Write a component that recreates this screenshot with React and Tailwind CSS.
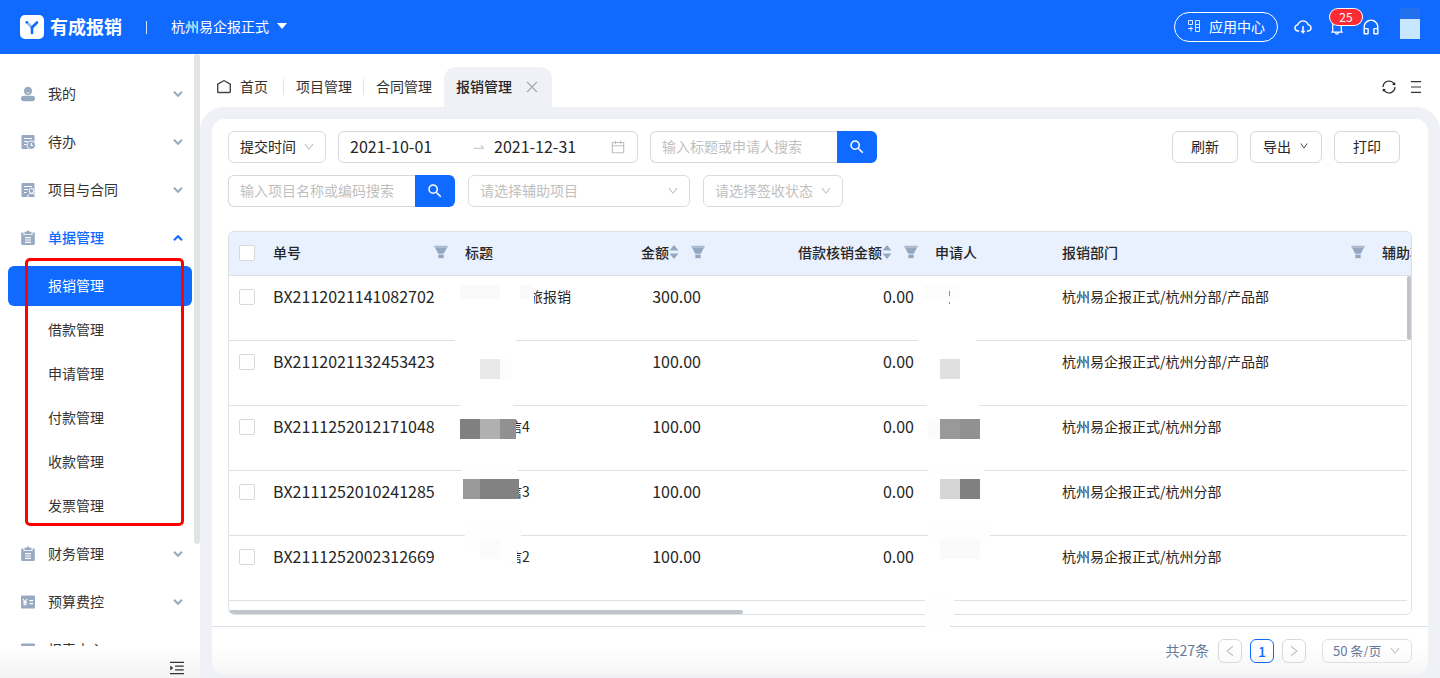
import React from 'react'
import clsx from 'clsx'
import {
  AiOutlineBell,
  AiOutlineCalendar,
  AiOutlineClose,
  AiOutlineCloudDownload,
  AiOutlineCustomerService,
  AiOutlineDown,
  AiOutlineLeft,
  AiOutlineMenuUnfold,
  AiOutlineRight,
  AiOutlineSwapRight,
  AiOutlineSync,
} from 'react-icons/ai'
import { MdSearch } from 'react-icons/md'

const menu = [
  { label: '我的', icon: 'user' },
  { label: '待办', icon: 'todo' },
  { label: '项目与合同', icon: 'contract' },
  {
    label: '单据管理',
    icon: 'clipboard',
    open: true,
    children: ['报销管理', '借款管理', '申请管理', '付款管理', '收款管理', '发票管理'],
  },
  { label: '财务管理', icon: 'clipboard' },
  { label: '预算费控', icon: 'budget' },
  { label: '报表中心', icon: 'report' },
]

const rows = [
  { no: 'BX2112021141082702', title: '旅报销', indent: 'pl-16', amount: '300.00', dept: '杭州易企报正式/杭州分部/产品部' },
  { no: 'BX2112021132453423', title: '', indent: 'pl-0', amount: '100.00', dept: '杭州易企报正式/杭州分部/产品部' },
  { no: 'BX2111252012171048', title: '信4', indent: 'pl-[43px]', amount: '100.00', dept: '杭州易企报正式/杭州分部' },
  { no: 'BX2111252010241285', title: '信3', indent: 'pl-[43px]', amount: '100.00', dept: '杭州易企报正式/杭州分部' },
  { no: 'BX2111252002312669', title: '信2', indent: 'pl-[43px]', amount: '100.00', dept: '杭州易企报正式/杭州分部' },
]

// mosaic blocks that hide private data: [x, y, width, height, colour]
const mosaic = [
  [227, 104, 61, 10, '#ffffff'],
  [287, 54, 19, 20, '#ffffff'],
  [232, 54, 40, 14, '#fafafa'],
  [292, 54, 14, 14, '#fafafa'],
  [690, 104, 58, 10, '#ffffff'],
  [696, 54, 36, 14, '#fcfcfc'],
  [721, 60, 1, 5, '#8a8a8a'],
  [721, 71, 1, 2, '#8a8a8a'],
  [232, 170, 53, 8, '#ffffff'],
  [252, 128, 20, 20, '#e9e9e9'],
  [272, 128, 12, 20, '#fcfcfc'],
  [699, 170, 52, 8, '#ffffff'],
  [712, 128, 20, 20, '#e0e0e0'],
  [234, 234, 56, 10, '#fefefe'],
  [232, 188, 20, 20, '#808080'],
  [252, 188, 20, 20, '#b0b0b0'],
  [272, 188, 16, 20, '#919191'],
  [700, 234, 56, 10, '#fefefe'],
  [700, 188, 12, 20, '#fbfbfb'],
  [712, 188, 20, 20, '#999999'],
  [732, 188, 20, 20, '#919191'],
  [237, 294, 56, 24, '#fefefe'],
  [235, 248, 17, 20, '#999999'],
  [252, 248, 39, 20, '#828282'],
  [700, 294, 62, 16, '#fefefe'],
  [712, 248, 20, 20, '#d5d5d5'],
  [732, 248, 20, 20, '#808080'],
  [278, 308, 11, 28, '#fefefe'],
  [252, 308, 20, 20, '#fbfbfb'],
  [712, 308, 40, 20, '#fafafa'],
  [697, 366, 29, 28, '#fefefe'],
  [698, 394, 24, 6, '#fefefe'],
]

function MenuIcon({ name }) {
  if (name === 'user') {
    return (
      <svg className="size-4" viewBox="0 0 16 16" fill="#98aac2">
        <path d="M8 .8a4 4 0 0 1 4 4.200c0 2.300-1.600 4.200-4 4.200S4 7.300 4 5a4 4 0 0 1 4-4.200z" />
        <rect x="1" y="9.800" width="14" height="5.400" rx="2.700" />
        <path d="M7 6.700c.6.400 1.400.4 2 0" stroke="#fff" fill="none" strokeLinecap="round" />
      </svg>
    )
  }
  if (name === 'todo' || name === 'contract') {
    return (
      <svg className="size-4" viewBox="0 0 16 16">
        <rect x="1.500" y="1" width="13" height="14" rx="1.200" fill="#98aac2" />
        <path d="M4 4.500h8M4 7.500h4M4 10.500h2.500" stroke="#fff" strokeWidth="1.200" />
        {name === 'todo' ? (
          <>
            <circle cx="11.300" cy="11.200" r="4.200" fill="#98aac2" stroke="#fff" />
            <path d="M11.200 9v2.500h2" stroke="#fff" strokeWidth="1.200" fill="none" />
          </>
        ) : (
          <>
            <path d="M7.500 15.500c0-2.200 1.500-3.500 3-4h2c1.500.5 3 1.800 3 4z" fill="#98aac2" stroke="#fff" />
            <circle cx="11.500" cy="8.800" r="2.400" fill="#98aac2" stroke="#fff" />
          </>
        )}
      </svg>
    )
  }
  if (name === 'clipboard') {
    return (
      <svg className="size-4" viewBox="0 0 16 16">
        <path d="M2 2.500h1.500v2.800h9V2.500H14a.8.8 0 0 1 .8.8V14a1 1 0 0 1-1 1H2.200a1 1 0 0 1-1-1V3.300a.8.8 0 0 1 .8-.8z" fill="#98aac2" />
        <path d="M4.500 1.800h2.200a1.300 1.300 0 0 1 2.600 0h2.200v2.500h-7z" fill="#98aac2" />
        <path d="M3.500 5h9v1h-9z" fill="#98aac2" />
        <path d="M5 7.700h6M5 10h6M5 12.300h6" stroke="#fff" strokeWidth="1.200" />
      </svg>
    )
  }
  return (
    <svg className="size-4" viewBox="0 0 16 16">
      <rect x="1" y="1.500" width="14" height="13" rx="1" fill="#98aac2" />
      <path d="M3 5l2 3 2-3M5 8v3.500M3.200 8.300h3.600M3.200 10h3.600M9.500 6.700h3.500M9.500 9.700h3.500" stroke="#fff" strokeWidth="1.200" fill="none" />
    </svg>
  )
}

function Chevron({ up = false }) {
  return (
    <svg className={clsx('size-3', up ? 'rotate-180 text-[#116aff]' : 'text-[#98aac2]')} viewBox="0 0 12 12">
      <path d="M2 3.800l4 4 4-4" fill="none" stroke="currentColor" strokeWidth="2" />
    </svg>
  )
}

function FilterIcon() {
  return (
    <svg className="h-[14px] w-[14px] shrink-0" viewBox="0 0 14 14" fill="#94a7c0">
      <path d="M.3.8h13.400v1.800H.3z" opacity=".75" />
      <path d="M.9 2.600h12.200L9.700 8.800H4.300z" />
      <path d="M4.300 8.800h5.400V10H4.300z" opacity=".35" />
      <path d="M4.300 10h5.400v3.200H4.300z" />
    </svg>
  )
}

function SortIcon() {
  return (
    <svg className="h-[14px] w-[10px] shrink-0" viewBox="0 0 10 14" fill="#94a7c0">
      <path d="M5 0l4.500 5.500H.5zM5 14L.5 8.500h9z" />
    </svg>
  )
}

function SelectBox({ label, children, className, muted = false }) {
  return (
    <div className={clsx('relative', className)}>
      <select
        aria-label={label}
        className={clsx(
          'h-8 w-full appearance-none rounded-md border border-[#d9dcdf] bg-white pr-7 pb-0.5 pl-[11px] text-sm outline-none',
          muted ? 'text-[#bfbfbf]' : 'text-[#262626]'
        )}
      >
        {children}
      </select>
      <AiOutlineDown className="pointer-events-none absolute top-[10px] right-[11px] size-3 text-[#bfbfbf]" />
    </div>
  )
}

function SearchBox({ placeholder }) {
  return (
    <div className="flex h-8 w-[227px]">
      <input
        type="text"
        aria-label={placeholder}
        placeholder={placeholder}
        className="min-w-0 flex-1 rounded-l-md border border-r-0 border-[#d9d9d9] px-[11px] pb-0.5 text-sm outline-none placeholder:text-[#bfbfbf]"
      />
      <button aria-label="搜索" className="flex w-10 items-center justify-center rounded-r-md bg-[#116aff] text-white">
        <MdSearch className="size-[18px]" />
      </button>
    </div>
  )
}

function Checkbox({ label }) {
  return (
    <input
      type="checkbox"
      aria-label={label}
      className="block size-4 appearance-none rounded-xs border border-[#d9d9d9] bg-white"
    />
  )
}

function Header() {
  return (
    <header className="flex h-[54px] shrink-0 items-center bg-[#116aff] px-5 text-white">
      <svg className="size-6" viewBox="0 0 24 24">
        <rect width="24" height="24" rx="5" fill="#fff" />
        <path d="M7 7.500l5 5" stroke="#8dbcff" strokeWidth="2.600" strokeLinecap="round" />
        <path d="M17 7.500l-5 5v5.500" stroke="#116aff" strokeWidth="2.600" strokeLinecap="round" strokeLinejoin="round" fill="none" />
        <circle cx="6.800" cy="7.300" r="1.300" fill="#116aff" />
      </svg>
      <h1 className="ml-[6px] pb-0.5 text-lg font-bold">有成报销</h1>
      <span className="ml-6 h-[13px] w-px bg-white/80" />
      <button className="ml-6 flex items-center gap-2 pb-0.5 text-sm">
        杭州易企报正式
        <svg className="h-[6px] w-[10px]" viewBox="0 0 10 6" fill="#fff">
          <path d="M0 0h10L5 6z" />
        </svg>
      </button>
      <div className="ml-auto flex items-center">
        <button className="flex h-[30px] items-center gap-2 rounded-full border border-white px-3 pb-0.5 text-sm">
          <svg className="size-[14px]" viewBox="0 0 14 14" fill="none" stroke="#fff" strokeOpacity=".85">
            <path d="M1.500 1.500h4v4h-4zM8.500 1.500h4v4h-4zM8.500 8.500h4v4h-4zM1 9.500h5M4 7.500v5M8.500 5.500v3M12.500 5.500v3" />
          </svg>
          应用中心
        </button>
        <button aria-label="下载" className="ml-[15px]">
          <AiOutlineCloudDownload className="size-5" />
        </button>
        <button aria-label="消息" className="relative ml-[15px]">
          <AiOutlineBell className="size-[18px]" />
          <span className="absolute -top-[9px] left-0.5 flex h-4 w-8 items-center justify-center rounded-full bg-[#fc2b36] pb-px text-xs ring-1 ring-white">
            25
          </span>
        </button>
        <button aria-label="客服" className="ml-[15px]">
          <AiOutlineCustomerService className="size-5" />
        </button>
        <div className="-mt-2 ml-[19px] h-[31px] w-5 bg-[#2370ee] pt-[11px]">
          <div className="size-5 bg-[#c8e6ff]" />
        </div>
      </div>
    </header>
  )
}

function Sidebar() {
  return (
    <aside className="relative flex w-[200px] shrink-0 flex-col bg-white">
      <nav className="min-h-0 flex-1 overflow-hidden pt-4">
        <ul>
          {menu.map((item) => (
            <li key={item.label}>
              <button
                className={clsx(
                  'flex h-12 w-full items-center gap-3 pr-4 pl-5 text-sm',
                  item.open ? 'font-medium text-[#116aff]' : 'text-[#333]'
                )}
              >
                <MenuIcon name={item.icon} />
                <span className="flex-1 pb-0.5 text-left">{item.label}</span>
                <Chevron up={item.open} />
              </button>
              {item.children && (
                <div className="relative">
                  <ul className="flex flex-col gap-1 py-1">
                    {item.children.map((child, i) => (
                      <li key={child} className="px-2">
                        <a
                          href="#"
                          className={clsx(
                            'flex h-10 items-center rounded-md pb-0.5 pl-10 text-sm',
                            i === 0 ? 'bg-[#116aff] text-white' : 'text-[#333]'
                          )}
                        >
                          {child}
                        </a>
                      </li>
                    ))}
                  </ul>
                  <div className="pointer-events-none absolute -top-1 left-[25px] h-[268px] w-[159px] rounded-[5px] border-3 border-[#fe0000]" />
                </div>
              )}
            </li>
          ))}
        </ul>
      </nav>
      <div className="flex h-8 shrink-0 items-center justify-end bg-linear-to-b from-white to-[#f3f3f3] pt-3 pr-[14px]">
        <button aria-label="收起菜单" className="text-[#333]">
          <AiOutlineMenuUnfold className="size-[18px]" />
        </button>
      </div>
      <div className="absolute top-0 right-0 h-[490px] w-[6px] rounded-full bg-[#e2e3e5]" />
    </aside>
  )
}

function TabBar() {
  return (
    <div className="flex h-[53px] shrink-0 items-end bg-white text-sm text-[#333]">
      <div className="flex h-10 items-center">
        <a href="#" className="flex items-center gap-2 pr-[15px] pb-0.5 pl-4">
          <svg className="size-4" viewBox="0 0 16 16" fill="none" stroke="#444" strokeWidth="1.400">
            <path d="M1.700 6.200L7.300 3a1.400 1.400 0 0 1 1.400 0l5.600 3.200v7.500a.8.8 0 0 1-.8.8h-11a.8.8 0 0 1-.8-.8z" strokeLinejoin="round" />
          </svg>
          首页
        </a>
        <span className="h-4 w-px bg-[#e5e5e5]" />
        <a href="#" className="pr-[11px] pb-0.5 pl-3">项目管理</a>
        <span className="h-4 w-px bg-[#e5e5e5]" />
        <a href="#" className="px-3 pb-0.5">合同管理</a>
      </div>
      <div className="flex h-10 items-center gap-3 rounded-t-xl bg-[#f0f1f6] px-3 font-medium text-[#262626]">
        <span className="pb-0.5">报销管理</span>
        <button aria-label="关闭" className="text-[#aaa]">
          <AiOutlineClose className="size-4" />
        </button>
      </div>
      <div className="mr-[19px] ml-auto flex h-10 items-center gap-[14px] text-[#222]">
        <button aria-label="刷新页面">
          <AiOutlineSync className="size-4" />
        </button>
        <button aria-label="更多">
          <svg className="h-3 w-[10px]" viewBox="0 0 10 12" stroke="#333" strokeWidth="1.200">
            <path d="M0 .6h10M0 6h10M0 11.400h10" />
          </svg>
        </button>
      </div>
    </div>
  )
}

function Filters() {
  const btn = 'flex h-8 items-center justify-center rounded-md border border-[#d9d9d9] bg-white pb-0.5 text-sm text-[#262626]'
  return (
    <div className="flex flex-col gap-3 pr-3">
      <div className="flex gap-3">
        <SelectBox label="时间类型" className="w-[98px]">
          <option>提交时间</option>
        </SelectBox>
        <div className="flex h-8 w-[300px] items-center rounded-md border border-[#d9d9d9] px-[11px]">
          <input type="text" aria-label="开始日期" defaultValue="2021-10-01" className="w-[122px] pb-0.5 text-base text-[#262626] outline-none" />
          <AiOutlineSwapRight className="size-[14px] shrink-0 text-[#bfbfbf]" />
          <input type="text" aria-label="结束日期" defaultValue="2021-12-31" className="ml-2 min-w-0 flex-1 pb-0.5 text-base text-[#262626] outline-none" />
          <AiOutlineCalendar className="size-4 shrink-0 text-[#bfbfbf]" />
        </div>
        <SearchBox placeholder="输入标题或申请人搜索" />
        <div className="ml-auto flex gap-3">
          <button className={clsx(btn, 'w-[66px]')}>刷新</button>
          <button className={clsx(btn, 'w-[72px] gap-2')}>
            导出
            <AiOutlineDown className="size-[10px]" />
          </button>
          <button className={clsx(btn, 'w-[66px]')}>打印</button>
        </div>
      </div>
      <div className="flex gap-[13px]">
        <SearchBox placeholder="输入项目名称或编码搜索" />
        <SelectBox label="辅助项目" className="w-[222px]" muted>
          <option>请选择辅助项目</option>
        </SelectBox>
        <SelectBox label="签收状态" className="w-[140px]" muted>
          <option>请选择签收状态</option>
        </SelectBox>
      </div>
    </div>
  )
}

function BillTable() {
  const th = 'pr-[9px] pb-[3px] pl-2 font-medium'
  const td = 'border-b border-[#dfe1e6] pt-[9px] pr-[13px] pl-2 align-top leading-[22px]'
  return (
    <div className="relative min-h-0 flex-1">
      <div className="relative h-full overflow-hidden rounded-md border border-[#dce1e4]">
        <table className="w-[1295px] table-fixed border-separate border-spacing-0 text-left text-sm text-[#262626]">
          <colgroup>
            <col className="w-9" />
            <col className="w-[192px]" />
            <col className="w-[137px]" />
            <col className="w-[120px]" />
            <col className="w-[213px]" />
            <col className="w-[127px]" />
            <col className="w-[320px]" />
            <col />
          </colgroup>
          <thead>
            <tr className="h-11 bg-[#e9f1ff] [&>th]:border-b [&>th]:border-[#dfe1e6]">
              <th className="pb-0.5 pl-[10px]">
                <Checkbox label="全选" />
              </th>
              <th className={th}>
                <div className="flex items-center justify-between">单号<FilterIcon /></div>
              </th>
              <th className={th}>标题</th>
              <th className={th}>
                <div className="flex items-center justify-end">金额<SortIcon /><span className="w-3" /><FilterIcon /></div>
              </th>
              <th className={th}>
                <div className="flex items-center justify-end">借款核销金额<SortIcon /><span className="w-3" /><FilterIcon /></div>
              </th>
              <th className={th}>申请人</th>
              <th className={th}>
                <div className="flex items-center justify-between">报销部门<FilterIcon /></div>
              </th>
              <th className={th}>辅助项目</th>
            </tr>
          </thead>
          <tbody>
            {rows.map((row) => (
              <tr key={row.no} className="h-[65px]">
                <td className="border-b border-[#dfe1e6] pt-[13px] pl-[10px] align-top">
                  <Checkbox label={row.no} />
                </td>
                <td className={clsx(td, 'text-base')}>{row.no}</td>
                <td className={td}>
                  <span className={row.indent}>{row.title}</span>
                </td>
                <td className={clsx(td, 'text-right text-base')}>{row.amount}</td>
                <td className={clsx(td, 'text-right text-base')}>0.00</td>
                <td className={td} />
                <td className={td}>{row.dept}</td>
                <td className={td} />
              </tr>
            ))}
          </tbody>
        </table>
        <div className="absolute top-11 right-0 bottom-0 w-1 bg-white">
          <div className="h-16 rounded-full bg-[#c1c5ca]" />
        </div>
        <div className="absolute bottom-0 left-0 h-1 w-[514px] rounded-full bg-[#c1c5ca]" />
      </div>
      {mosaic.map(([left, top, width, height, background], i) => (
        <div key={i} className="absolute" style={{ left, top, width, height, background }} />
      ))}
    </div>
  )
}

function Pagination() {
  const page = 'flex size-6 items-center justify-center rounded-md border text-sm'
  return (
    <div className="mt-[11px] flex h-12 shrink-0 items-center justify-end rounded-b-xl border-t border-[#dce1e8] bg-linear-to-b from-white from-40% to-[#f6f6f6] pr-4 text-sm text-[#64799b]">
      <span className="mr-[9px] pb-0.5">共27条</span>
      <div className="flex gap-2">
        <button aria-label="上一页" className={clsx(page, 'border-[#d9d9d9] text-[#bfbfbf]')}>
          <AiOutlineLeft className="size-[14px]" />
        </button>
        <button className={clsx(page, 'border-[#116aff] font-medium text-[#116aff]')}>1</button>
        <button aria-label="下一页" className={clsx(page, 'border-[#d9d9d9] text-[#bfbfbf]')}>
          <AiOutlineRight className="size-[14px]" />
        </button>
      </div>
      <div className="relative ml-4 w-[90px]">
        <select
          aria-label="每页条数"
          className="block h-6 w-full appearance-none rounded-md border border-[#dce1e4] pl-[10px] text-[13px] leading-none outline-none"
        >
          <option>50 条/页</option>
        </select>
        <AiOutlineDown className="pointer-events-none absolute top-[6px] right-[11px] size-3 text-[#bfbfbf]" />
      </div>
    </div>
  )
}

export default function App() {
  return (
    <div className="flex h-screen flex-col overflow-hidden bg-white font-['Noto_Sans_CJK_SC',sans-serif]">
      <Header />
      <div className="flex min-h-0 flex-1">
        <Sidebar />
        <div className="flex min-w-0 flex-1 flex-col">
          <TabBar />
          <div className="flex min-h-0 flex-1 flex-col rounded-t-3xl bg-[#f0f1f6] px-3 pt-3 pb-1">
            <main className="flex min-h-0 flex-1 flex-col rounded-xl bg-white pt-3">
              <div className="flex min-h-0 flex-1 flex-col gap-6 px-4">
                <Filters />
                <BillTable />
              </div>
              <Pagination />
            </main>
          </div>
        </div>
      </div>
    </div>
  )
}
